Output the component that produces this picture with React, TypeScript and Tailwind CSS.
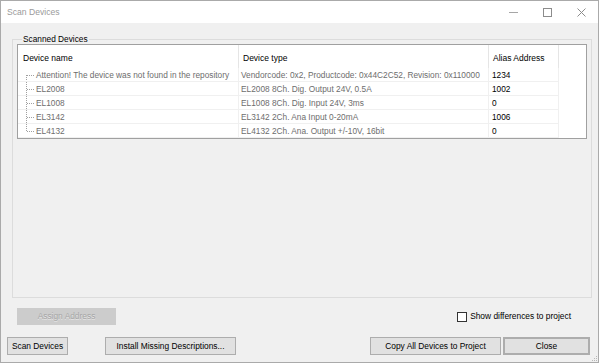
import React from "react";

const rows = [
  {
    name: "Attention! The device was not found in the repository",
    type: "Vendorcode: 0x2, Productcode: 0x44C2C52, Revision: 0x110000",
    alias: "1234",
  },
  { name: "EL2008", type: "EL2008 8Ch. Dig. Output 24V, 0.5A", alias: "1002" },
  { name: "EL1008", type: "EL1008 8Ch. Dig. Input 24V, 3ms", alias: "0" },
  { name: "EL3142", type: "EL3142 2Ch. Ana Input 0-20mA", alias: "1006" },
  { name: "EL4132", type: "EL4132 2Ch. Ana. Output +/-10V, 16bit", alias: "0" },
];

function TreeLines({ first, last }: { first: boolean; last: boolean }) {
  // dotted tree connector for one row
  return (
    <svg width="8" height="14" className="shrink-0">
      <line
        x1="0.5"
        y1={first ? 7 : 0}
        x2="0.5"
        y2={last ? 7 : 14}
        stroke="#a0a0a0"
        strokeDasharray="1 1"
      />
      <line x1="1" y1="7.5" x2="8" y2="7.5" stroke="#a0a0a0" strokeDasharray="1 1" />
    </svg>
  );
}

function Button({
  children,
  className = "",
}: {
  children: React.ReactNode;
  className?: string;
}) {
  return (
    <div
      className={`flex h-[18px] items-center justify-center border border-[#adadad] bg-[#e1e1e1] text-[8.4px] text-black ${className}`}
    >
      {children}
    </div>
  );
}

export default function App() {
  return (
    <div className="flex h-[363px] w-[599px] flex-col border border-[#aaaaaa] font-['Liberation_Sans',Arial,sans-serif] leading-none">
      {/* title bar */}
      <div className="flex h-[22px] shrink-0 items-center bg-white">
        <span className="ml-[6px] mt-[1px] text-[8.6px] text-[#9a9a9a]">Scan Devices</span>
        <div className="ml-auto flex h-full">
          <div className="flex w-[34px] items-center justify-center">
            <svg width="9" height="9">
              <line x1="0" y1="4.5" x2="9" y2="4.5" stroke="#a6a6a6" />
            </svg>
          </div>
          <div className="flex w-[34px] items-center justify-center">
            <svg width="9" height="9">
              <rect x="0.5" y="0.5" width="8" height="8" fill="none" stroke="#8c8c8c" />
            </svg>
          </div>
          <div className="flex w-[34px] items-center justify-center">
            <svg width="9" height="9">
              <path d="M0.5 0.5 L8.5 8.5 M8.5 0.5 L0.5 8.5" stroke="#8c8c8c" />
            </svg>
          </div>
        </div>
      </div>

      {/* body */}
      <div className="relative flex flex-1 flex-col bg-[#f0f0f0]">
        <fieldset className="ml-[11px] mr-[6px] mt-[11px] h-[264px] border border-[#dcdcdc] px-[4px] pb-[3px]">
          <legend className="ml-[5px] h-[10px] px-[1px] text-[8.3px] leading-[10px] text-black">
            Scanned Devices
          </legend>
          <div className="h-full border border-[#a0a0a0] bg-white">
            {/* header */}
            <div className="flex h-[23px] text-[8.5px] text-black">
              <div className="flex w-[221px] items-center border-r border-[#e5e5e5] pl-[5px] pt-[3px]">
                Device name
              </div>
              <div className="flex w-[250px] items-center border-r border-[#e5e5e5] pl-[4px] pt-[3px]">
                Device type
              </div>
              <div className="flex w-[70px] items-center border-r border-[#e5e5e5] pl-[4px] pt-[3px]">
                Alias Address
              </div>
            </div>
            {/* rows */}
            {rows.map((r, i) => (
              <div key={i} className="flex h-[14px] text-[8.3px]">
                <div className="flex w-[221px] items-start overflow-hidden whitespace-nowrap border-b border-r border-[#f0f0f0] pl-[8px] text-[#6d6d6d]">
                  <TreeLines first={i === 0} last={i === rows.length - 1} />
                  <span className="ml-[2px] pt-[3px]">{r.name}</span>
                </div>
                <div className="w-[250px] overflow-hidden whitespace-nowrap border-b border-r border-[#f0f0f0] pl-[2px] pt-[3px] text-[#6d6d6d]">
                  {r.type}
                </div>
                <div className="w-[70px] overflow-hidden whitespace-nowrap border-b border-r border-[#f0f0f0] pl-[3px] pt-[3px] text-black">
                  {r.alias}
                </div>
              </div>
            ))}
          </div>
        </fieldset>

        {/* assign + checkbox row */}
        <div className="mt-[10px] flex h-[17px] items-center">
          <div className="ml-[16px] flex h-[17px] w-[99px] items-center justify-center bg-[#cccccc] text-[8.4px] text-[#a6a6a6] [text-shadow:0_1px_0_#e6e6e6]">
            Assign Address
          </div>
          <div className="ml-auto mr-[27px] flex items-center">
            <div className="h-[10px] w-[10px] border border-[#333333] bg-white" />
            <span className="ml-[3px] text-[8.4px] text-black">Show differences to project</span>
          </div>
        </div>

        {/* bottom buttons */}
        <div className="mt-[12px] flex">
          <Button className="ml-[6px] w-[61px]">Scan Devices</Button>
          <Button className="ml-[37px] w-[131px]">Install Missing Descriptions...</Button>
          <Button className="ml-auto w-[131px]">Copy All Devices to Project</Button>
          <Button className="ml-[2px] mr-[8px] w-[87px] border-2 border-[#0078d7]">Close</Button>
        </div>

        {/* size grip */}
        <svg width="7" height="7" className="absolute bottom-0 right-0">
          <rect x="5" y="1" width="1" height="1" fill="#b8b8b8" />
          <rect x="3" y="3" width="1" height="1" fill="#b8b8b8" />
          <rect x="5" y="3" width="1" height="1" fill="#b8b8b8" />
          <rect x="1" y="5" width="1" height="1" fill="#b8b8b8" />
          <rect x="3" y="5" width="1" height="1" fill="#b8b8b8" />
          <rect x="5" y="5" width="1" height="1" fill="#b8b8b8" />
        </svg>
      </div>
    </div>
  );
}
